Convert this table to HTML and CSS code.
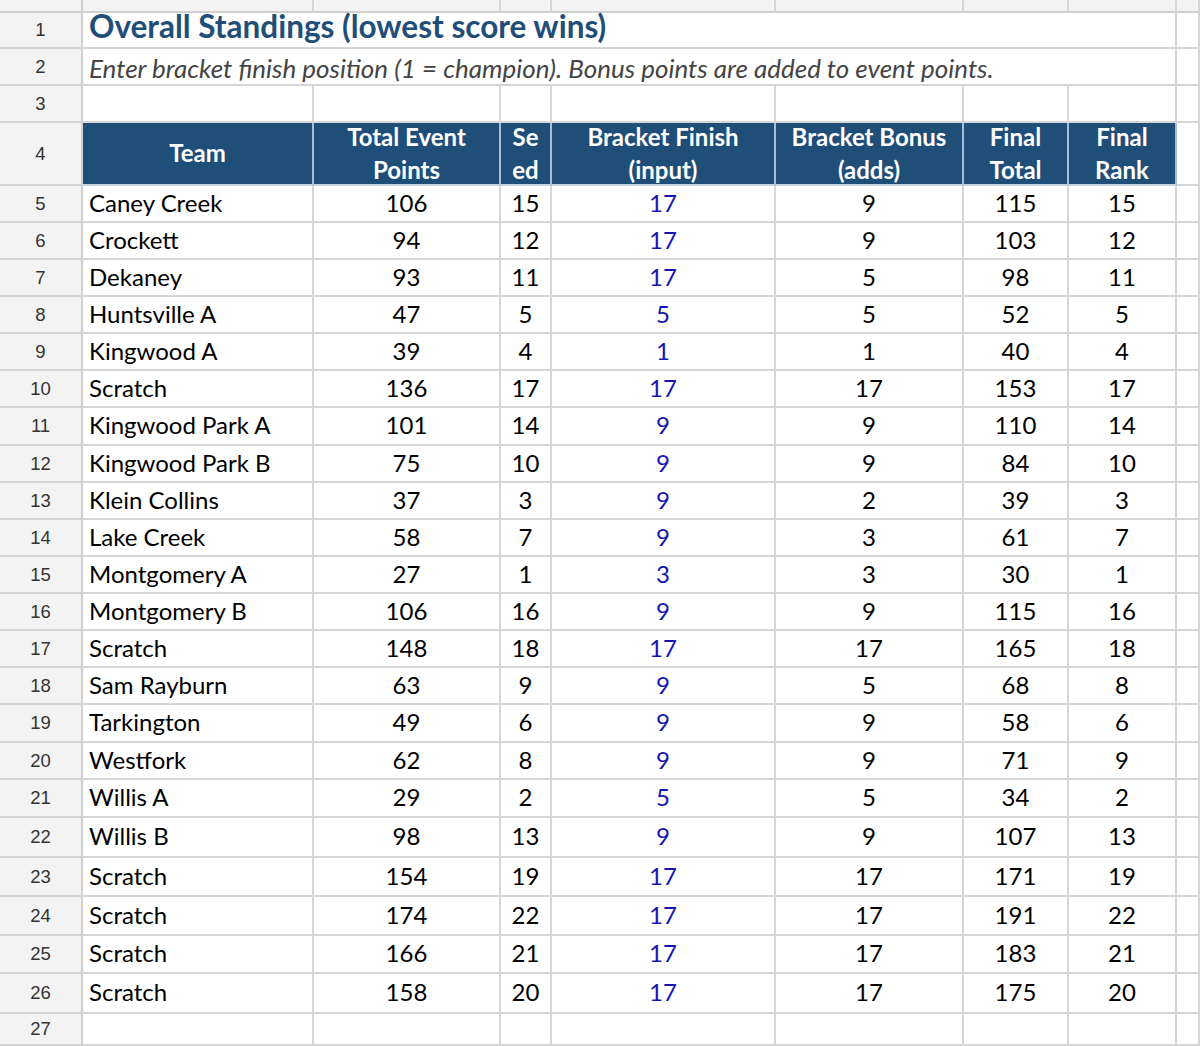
FILE: index.html
```html
<!DOCTYPE html>
<html>
<head>
<meta charset="utf-8">
<title>Overall Standings</title>
<link rel="stylesheet" href="styles.css">
</head>
<body>
<div class="sheet">
  <div class="row h13 colhead"><div class="c rn"></div><div class="c"></div><div class="c"></div><div class="c"></div><div class="c"></div><div class="c"></div><div class="c"></div><div class="c"></div><div class="c"></div></div>
  <div class="row h36"><div class="c rn">1</div><div class="c merged title">Overall Standings (lowest score wins)</div><div class="c"></div></div>
  <div class="row h37"><div class="c rn">2</div><div class="c merged subtitle">Enter bracket finish position (1 = champion). Bonus points are added to event points.</div><div class="c"></div></div>
  <div class="row h37"><div class="c rn">3</div><div class="c"></div><div class="c"></div><div class="c"></div><div class="c"></div><div class="c"></div><div class="c"></div><div class="c"></div><div class="c"></div></div>
  <div class="row h63 head"><div class="c rn">4</div><div class="c hd">Team</div><div class="c hd">Total Event<br>Points</div><div class="c hd">Se<br>ed</div><div class="c hd">Bracket Finish<br>(input)</div><div class="c hd">Bracket Bonus<br>(adds)</div><div class="c hd">Final<br>Total</div><div class="c hd">Final<br>Rank</div><div class="c"></div></div>

  <div class="row h37"><div class="c rn">5</div><div class="c team">Caney Creek</div><div class="c">106</div><div class="c">15</div><div class="c inp">17</div><div class="c">9</div><div class="c">115</div><div class="c">15</div><div class="c"></div></div>
  <div class="row h37"><div class="c rn">6</div><div class="c team">Crockett</div><div class="c">94</div><div class="c">12</div><div class="c inp">17</div><div class="c">9</div><div class="c">103</div><div class="c">12</div><div class="c"></div></div>
  <div class="row h37"><div class="c rn">7</div><div class="c team">Dekaney</div><div class="c">93</div><div class="c">11</div><div class="c inp">17</div><div class="c">5</div><div class="c">98</div><div class="c">11</div><div class="c"></div></div>
  <div class="row h37"><div class="c rn">8</div><div class="c team">Huntsville A</div><div class="c">47</div><div class="c">5</div><div class="c inp">5</div><div class="c">5</div><div class="c">52</div><div class="c">5</div><div class="c"></div></div>
  <div class="row h37"><div class="c rn">9</div><div class="c team">Kingwood A</div><div class="c">39</div><div class="c">4</div><div class="c inp">1</div><div class="c">1</div><div class="c">40</div><div class="c">4</div><div class="c"></div></div>
  <div class="row h37"><div class="c rn">10</div><div class="c team">Scratch</div><div class="c">136</div><div class="c">17</div><div class="c inp">17</div><div class="c">17</div><div class="c">153</div><div class="c">17</div><div class="c"></div></div>
  <div class="row h38"><div class="c rn">11</div><div class="c team">Kingwood Park A</div><div class="c">101</div><div class="c">14</div><div class="c inp">9</div><div class="c">9</div><div class="c">110</div><div class="c">14</div><div class="c"></div></div>
  <div class="row h37"><div class="c rn">12</div><div class="c team">Kingwood Park B</div><div class="c">75</div><div class="c">10</div><div class="c inp">9</div><div class="c">9</div><div class="c">84</div><div class="c">10</div><div class="c"></div></div>
  <div class="row h37"><div class="c rn">13</div><div class="c team">Klein Collins</div><div class="c">37</div><div class="c">3</div><div class="c inp">9</div><div class="c">2</div><div class="c">39</div><div class="c">3</div><div class="c"></div></div>
  <div class="row h37"><div class="c rn">14</div><div class="c team">Lake Creek</div><div class="c">58</div><div class="c">7</div><div class="c inp">9</div><div class="c">3</div><div class="c">61</div><div class="c">7</div><div class="c"></div></div>
  <div class="row h37"><div class="c rn">15</div><div class="c team">Montgomery A</div><div class="c">27</div><div class="c">1</div><div class="c inp">3</div><div class="c">3</div><div class="c">30</div><div class="c">1</div><div class="c"></div></div>
  <div class="row h37"><div class="c rn">16</div><div class="c team">Montgomery B</div><div class="c">106</div><div class="c">16</div><div class="c inp">9</div><div class="c">9</div><div class="c">115</div><div class="c">16</div><div class="c"></div></div>
  <div class="row h37"><div class="c rn">17</div><div class="c team">Scratch</div><div class="c">148</div><div class="c">18</div><div class="c inp">17</div><div class="c">17</div><div class="c">165</div><div class="c">18</div><div class="c"></div></div>
  <div class="row h37"><div class="c rn">18</div><div class="c team">Sam Rayburn</div><div class="c">63</div><div class="c">9</div><div class="c inp">9</div><div class="c">5</div><div class="c">68</div><div class="c">8</div><div class="c"></div></div>
  <div class="row h38"><div class="c rn">19</div><div class="c team">Tarkington</div><div class="c">49</div><div class="c">6</div><div class="c inp">9</div><div class="c">9</div><div class="c">58</div><div class="c">6</div><div class="c"></div></div>
  <div class="row h37"><div class="c rn">20</div><div class="c team">Westfork</div><div class="c">62</div><div class="c">8</div><div class="c inp">9</div><div class="c">9</div><div class="c">71</div><div class="c">9</div><div class="c"></div></div>
  <div class="row h38"><div class="c rn">21</div><div class="c team">Willis A</div><div class="c">29</div><div class="c">2</div><div class="c inp">5</div><div class="c">5</div><div class="c">34</div><div class="c">2</div><div class="c"></div></div>
  <div class="row h40"><div class="c rn">22</div><div class="c team">Willis B</div><div class="c">98</div><div class="c">13</div><div class="c inp">9</div><div class="c">9</div><div class="c">107</div><div class="c">13</div><div class="c"></div></div>
  <div class="row h39"><div class="c rn">23</div><div class="c team">Scratch</div><div class="c">154</div><div class="c">19</div><div class="c inp">17</div><div class="c">17</div><div class="c">171</div><div class="c">19</div><div class="c"></div></div>
  <div class="row h39"><div class="c rn">24</div><div class="c team">Scratch</div><div class="c">174</div><div class="c">22</div><div class="c inp">17</div><div class="c">17</div><div class="c">191</div><div class="c">22</div><div class="c"></div></div>
  <div class="row h38"><div class="c rn">25</div><div class="c team">Scratch</div><div class="c">166</div><div class="c">21</div><div class="c inp">17</div><div class="c">17</div><div class="c">183</div><div class="c">21</div><div class="c"></div></div>
  <div class="row h40"><div class="c rn">26</div><div class="c team">Scratch</div><div class="c">158</div><div class="c">20</div><div class="c inp">17</div><div class="c">17</div><div class="c">175</div><div class="c">20</div><div class="c"></div></div>
  <div class="row last"><div class="c rn">27</div><div class="c"></div><div class="c"></div><div class="c"></div><div class="c"></div><div class="c"></div><div class="c"></div><div class="c"></div><div class="c"></div></div>
</div>
</body>
</html>
```
FILE: styles.css
```css
* { box-sizing: border-box; }
html, body { margin: 0; padding: 0; background: #fff; }
body { width: 1200px; height: 1046px; overflow: hidden; }

.sheet {
  display: flex;
  flex-direction: column;
  height: 1046px;
  font-family: "Lato", "Liberation Sans", sans-serif;
  color: #000;
}

.row {
  display: grid;
  grid-template-columns: 83px 231px 187px 51px 224px 188px 105px 108px 23px;
  grid-template-rows: minmax(0, 1fr);
  flex: none;
}
.h13 { height: 13px; }
.h36 { height: 36px; }
.h37 { height: 37px; }
.h38 { height: 38px; }
.h39 { height: 39px; }
.h40 { height: 40px; }
.h63 { height: 63px; }
.last { flex: 1; }

.c {
  border-right: 2px solid #d6d6d6;
  border-bottom: 2px solid #d6d6d6;
  display: flex;
  align-items: center;
  justify-content: center;
  font-size: 24px;
  padding-bottom: 3px;
  white-space: nowrap;
  overflow: visible;
  background: #fff;
}

.rn {
  background: #f3f3f3;
  border-right-color: #cfcfcf;
  border-bottom-color: #d2d2d2;
  font-family: "Liberation Sans", Arial, sans-serif;
  font-size: 18.5px;
  color: #333;
  padding-bottom: 0;
}

.colhead .c { background: #f3f3f3; border-bottom-color: #d0d0d0; padding: 0; }

.merged {
  grid-column: span 7;
  justify-content: flex-start;
  padding-left: 6px;
}
.title {
  font-weight: 700;
  font-size: 31.5px;
  line-height: 1;
  color: #1f4e79;
  padding-bottom: 6px;
}
.subtitle {
  font-style: italic;
  font-size: 26px;
  color: #444;
  padding-bottom: 0;
  padding-top: 2px;
}

.team { justify-content: flex-start; padding-left: 6px; }
.inp { color: #1414b4; }

.hd {
  background: #1f4e79;
  color: #fff;
  font-weight: 700;
  font-size: 24px;
  line-height: 33px;
  text-align: center;
  padding-bottom: 2px;
  border-right-color: #a9bbd0;
  border-bottom-color: #c9d3de;
}
```
